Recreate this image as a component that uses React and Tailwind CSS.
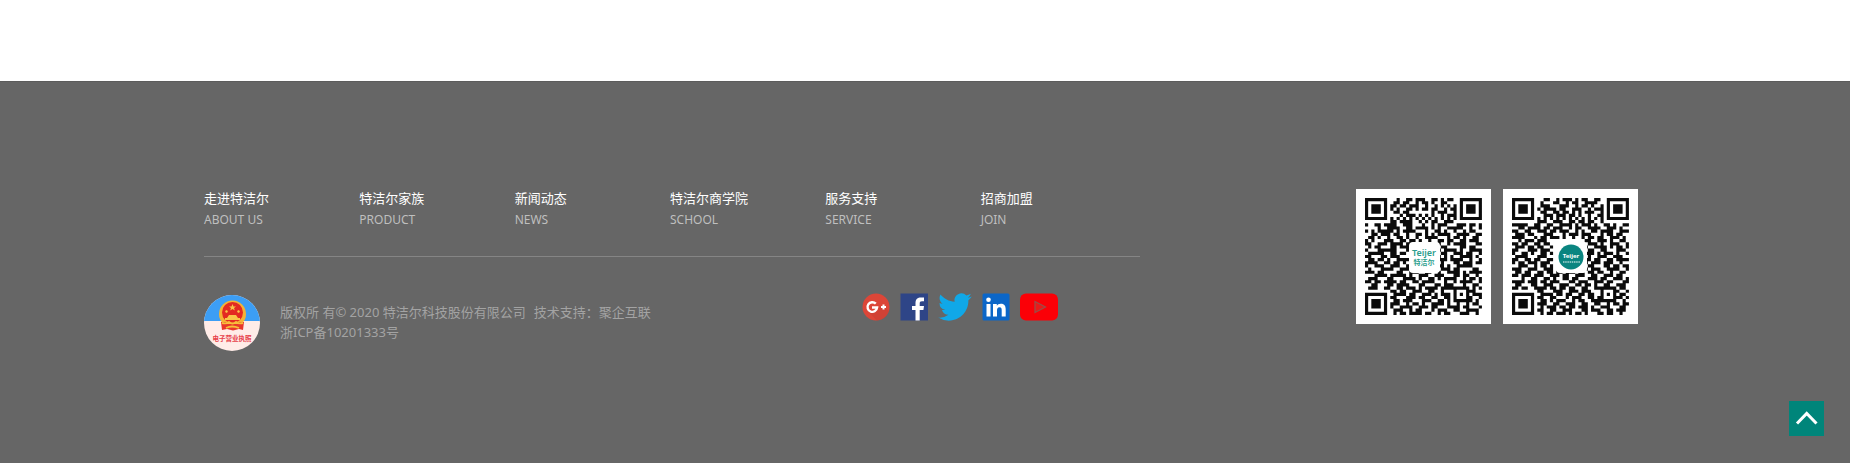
import React from 'react';

const navItems = [
  { title: '走进特洁尔', sub: 'ABOUT US' },
  { title: '特洁尔家族', sub: 'PRODUCT' },
  { title: '新闻动态', sub: 'NEWS' },
  { title: '特洁尔商学院', sub: 'SCHOOL' },
  { title: '服务支持', sub: 'SERVICE' },
  { title: '招商加盟', sub: 'JOIN' },
];

// 37 x 37 modules, one string per row
const serviceCode = [
  '#######...#..##.###..##.#.##..#######',
  '#.....#..##.##..#.##.#..##....#.....#',
  '#.###.#.##.##.###..#..#.#.#.#.#.###.#',
  '#.###.#.#.#..##.#.##.##..#.##.#.###.#',
  '#.###.#..##.##.......#.###..#.#.###.#',
  '#.....#....#.###.#.#.#..#.###.#.....#',
  '#######.#.#.#.#.#.#.#.#.#.#.#.#######',
  '........##.####..#.#.##..###.........',
  '#..##.####..###...#..#.###...###.##.#',
  '....#..####..##.####.#.#..#####..#..#',
  '#.#.#####.#.####...#..##.#..#..#.##..',
  '..##.###.##..#..##.#.#.####..####..##',
  '.##.#..#..##.#..#..####...#.##.#..##.',
  '#.#...###..##.##.#..#..##.##..##.###.',
  '##..###.####.##........#..#.####...##',
  '.#.##...##.###..........##....##.##..',
  '#...######...#.........#.####.#..####',
  '.#####..##.##...........##..###.##..#',
  '##...##.###............#.#.#..####.#.',
  '.##.##.#..####.........###.####..#..#',
  '####..##.##.#...........#...##.###.##',
  '#..###..###..#.........##.#..#####...',
  '.#...####..###..........###.##....##.',
  '###.##....##..###..##..#..####.#.####',
  '...####.#####.#..###..###...##.##..#.',
  '.###...##...####.#..##.#.####..#.##.#',
  '##.##.####.##..##.####...#..#.####..#',
  '..##...##.####...##...##.###...#..##.',
  '.###..##..##.###.#.####.#########.#.#',
  '........##.##..###..##..#...#...###..',
  '#######..####.##..###.#.###.#.#.#.###',
  '#.....#.##...###.##..##..##.#...##..#',
  '#.###.#..##.###...###..##.#.######.#.',
  '#.###.#.###..#.##.#..####.#..#..#.##.',
  '#.###.#.#..####..###.##...####.##...#',
  '#.....#..###..#.##...#.###..##..####.',
  '#######..#.##.####.##..#.##...###..#.',
];

const officialCode = [
  '#######...##..#.###.#.##..##..#######',
  '#.....#..#...##..#.##..####...#.....#',
  '#.###.#..###...###..#.##.#..#.#.###.#',
  '#.###.#.#.####.##..###..#.###.#.###.#',
  '#.###.#..##..##.##.#.#.###..#.#.###.#',
  '#.....#...###.###.##.#..#..##.#.....#',
  '#######.#.#.#.#.#.#.#.#.#.#.#.#######',
  '........###..###..##.##.##..#........',
  '#####..##..##..####.#.###.#..##.#..##',
  '..##.####.##.###..#.##..####..###.#..',
  '##..##..###.##.###..#.#..##.####..###',
  '.###.##...###...#.###.###...#.##.##..',
  '####...#.##.###.#..#..#.##.##..###.#.',
  '..#.###.###............##..###.#..##.',
  '##.##..##.##............###.#..###..#',
  '.###.##.##..#..........#..####.#.##.#',
  '##...###.###............##..##...###.',
  '#..##.#..##.#..........###.#.###.#..#',
  '.####...###.............#..###..###..',
  '##..##.##..##..........##.##..##.####',
  '#.##.###.###...........#.###.###..#..',
  '..###..#.##.#...........##...##.##.##',
  '###..###..###..........#.###..####..#',
  '.##.##..##.##.##.###.##.##.##..#..##.',
  '##.###.###..###.##..###..##..###.##..',
  '...#..##..##.#..##.##...###.##..###.#',
  '####.###.##.###...##.###..###.##...##',
  '.##...##..###..###..##.##.#..##..###.',
  '##.##..####.##.##.##..##..#######.##.',
  '........##...###..###.###...#...##..#',
  '#######..####.##.##..##.##..#.#.#.##.',
  '#.....#.##..##...#.###..##.##...###.#',
  '#.###.#..##.#.###..#.##..########..#.',
  '#.###.#.###..##..###..##..##..#.##.##',
  '#.###.#..#.###.##.##.###.#..###...##.',
  '#.....#.##..##..###...##.###..##.###.',
  '#######..#.##.###.#.##.#...##.##..#..',
];

const QrCode = ({ rows, label, children }) => (
  <svg viewBox="0 0 135 135" role="img" aria-label={label} className="size-[135px] bg-white">
    <path
      transform="translate(9 9) scale(3.16)"
      fill="#0b0b0b"
      d={rows
        .map((row, y) => row.replace(/#+/g, (run, x) => `M${x} ${y}h${run.length}v1h-${run.length}z `).replace(/\./g, ''))
        .join('')}
    />
    {children}
  </svg>
);

const LicenseBadge = () => (
  <svg viewBox="0 0 56 56" className="size-14" role="img" aria-label="电子营业执照">
    <defs>
      <clipPath id="badge">
        <circle cx="28" cy="28" r="28" />
      </clipPath>
    </defs>
    <g clipPath="url(#badge)">
      <path fill="#ffece8" d="M0 0h56v56H0z" />
      <path fill="#3c9ef5" d="M0 0h56v26H0z" />
    </g>
    <circle cx="28.500" cy="19" r="13.500" fill="#f5b335" />
    <circle cx="28.500" cy="17.500" r="10.500" fill="#e32a21" />
    <path fill="#e8372a" d="M17 27h23l-1 8-4-1-6 1.500-6-1.500-5 1z" />
    <path fill="#f9c648" d="m28.500 9 1 2.400h2.500l-2 1.600.8 2.500-2.300-1.500-2.300 1.500.8-2.500-2-1.600h2.500zM22 15l2 1-1 2-2-1zM35 15l-2 1 1 2 2-1zM25 20h7l2 3h2v2H21v-2h2z" />
    <path d="M18 28q5 1 7-1 3.500 3 7 0 2 2 7 1M22 33q6-3 13 0" fill="none" stroke="#f7bd3b" strokeWidth="1.800" />
    <text x="28" y="46" textAnchor="middle" fontSize="6.500" fontWeight="700" fill="#e7404a">
      电子营业执照
    </text>
  </svg>
);

const GooglePlus = () => (
  <svg viewBox="0 0 28 28" className="size-7">
    <circle cx="14" cy="14" r="13.500" fill="#dc4638" />
    <path d="m14 18 5-5 8 5a14 14 0 0 1-12 9.500L7 19z" fill="#c53d31" opacity=".5" />
    <path d="M13.800 10.700a4.800 4.800 0 1 0 1.300 3.800H10" fill="none" stroke="#fff" strokeWidth="2.400" />
    <path d="M21.500 11.500v5M19 14h5" stroke="#fff" strokeWidth="2" />
  </svg>
);

const Facebook = () => (
  <svg viewBox="0 0 28 28" className="size-7">
    <path fill="#2e4587" d="M.5.5H28v27H.5z" />
    <path fill="#fff" d="M15.500 27.500V17H12v-4h3.500v-3c0-4 2.200-5.600 5.400-5.600 1.500 0 2.500.1 3.100.2v3.600h-2c-1.800 0-2.300.9-2.300 2.300V13h4.300l-.6 4h-3.700v10.500z" />
  </svg>
);

const Twitter = () => (
  <svg viewBox="0 2 24 20" className="h-7 w-[34px]">
    <path
      fill="#10a8e8"
      d="M23.950 4.570a10 10 0 0 1-2.820.770 4.960 4.960 0 0 0 2.160-2.720c-.95.550-2 .95-3.130 1.180a4.920 4.920 0 0 0-8.380 4.480C7.690 8.090 4.070 6.130 1.640 3.160a4.820 4.820 0 0 0-.67 2.470c0 1.710.87 3.210 2.190 4.100a4.900 4.900 0 0 1-2.230-.62v.06a4.920 4.920 0 0 0 3.950 4.830 5 5 0 0 1-2.210.080 4.940 4.940 0 0 0 4.600 3.420A9.870 9.870 0 0 1 0 19.540a14 14 0 0 0 7.550 2.210c9.050 0 14-7.500 14-13.980l-.02-.64a9.900 9.900 0 0 0 2.420-2.560z"
    />
  </svg>
);

const LinkedIn = () => (
  <svg viewBox="0 0 28 28" className="size-7">
    <rect x=".5" y=".5" width="27" height="27" rx="1.500" fill="#0b66c8" />
    <circle cx="6.500" cy="6.800" r="2.300" fill="#fff" />
    <path fill="#fff" d="M4.500 11h4v12.500h-4zM11 11h3.800v1.700c.7-1.200 2.100-2 4-2 4 0 4.900 2.600 4.900 6v6.800h-4V17.400c0-1.600-.1-3.200-2.200-3.200-2 0-2.500 1.500-2.500 3.100v6.200h-4z" />
  </svg>
);

const YouTube = () => (
  <svg viewBox="0 0 38 28" className="h-7 w-[38px]">
    <rect y=".5" width="38" height="27" rx="6" fill="#fb0007" />
    <path d="m15 8.500 10.500 5.500L15 19.500z" fill="#e81b1b" stroke="#96504a" strokeWidth="1.200" />
  </svg>
);

const socials = [
  { name: 'Google+', Icon: GooglePlus },
  { name: 'Facebook', Icon: Facebook },
  { name: 'Twitter', Icon: Twitter },
  { name: 'LinkedIn', Icon: LinkedIn },
  { name: 'YouTube', Icon: YouTube },
];

const App = () => {
  return (
    <div className="flex min-h-screen flex-col bg-white pt-[81px] font-['Noto_Sans','Noto_Sans_CJK_SC',sans-serif] text-[13px] leading-5">
      <footer className="flex flex-1 items-start justify-between border-t border-[#5c5c5c] bg-[#666] pt-[106px] pr-[212px] pb-16 pl-[204px]">
        <div className="w-[936px]">
          <nav className="grid grid-cols-6 border-b border-[#858585] pr-1 pb-6">
            {navItems.map((item) => (
              <a key={item.sub} href="#" className="block">
                <span className="block text-white">{item.title}</span>
                <span className="block text-xs leading-6 text-[#bfbfbf]">{item.sub}</span>
              </a>
            ))}
          </nav>

          {/* Copyright + social links */}
          <div className="flex items-start justify-between pt-9 pr-[82px]">
            <div className="flex items-center gap-5 pt-[2px] text-[#a3a3a3]">
              <a href="#" aria-label="电子营业执照">
                <LicenseBadge />
              </a>
              <div className="pb-[2px]">
                <p>
                  版权所 有© 2020 特洁尔科技股份有限公司
                  <a href="#" className="ml-2">技术支持：聚企互联</a>
                </p>
                <p>
                  <a href="#">浙ICP备10201333号</a>
                </p>
              </div>
            </div>
            <div className="flex gap-[10px]">
              {socials.map(({ name, Icon }) => (
                <a key={name} href="#" aria-label={name}>
                  <Icon />
                </a>
              ))}
            </div>
          </div>
        </div>

        {/* QR codes */}
        <div className="flex gap-3 pt-px">
          <QrCode rows={serviceCode} label="Teijer 特洁尔">
            <rect x="53" y="53" width="31" height="31" rx="4" fill="#fff" />
            <text x="68" y="67" textAnchor="middle" fontSize="9" fontWeight="600" fill="#2a9d8c">
              Teijer
            </text>
            <text x="68" y="76" textAnchor="middle" fontSize="7" fontWeight="700" fill="#2a9d8c">
              特洁尔
            </text>
          </QrCode>
          <QrCode rows={officialCode} label="Teijer">
            <rect x="53" y="53" width="31" height="31" rx="4" fill="#fff" />
            <circle cx="68" cy="68" r="12.500" fill="#0a8580" />
            <text x="68" y="69" textAnchor="middle" fontSize="6" fontWeight="700" fill="#fff">
              Teijer
            </text>
            <path d="M60 73h17" stroke="#a8d5d2" strokeWidth="1.500" strokeDasharray="1.500 .7" />
          </QrCode>
        </div>
      </footer>

      <button
        type="button"
        aria-label="Back to top"
        className="fixed right-[26px] bottom-[27px] flex size-[35px] items-center justify-center bg-[#00857a] text-white"
      >
        <svg viewBox="0 0 35 35" className="size-[35px]" fill="none" stroke="currentColor" strokeWidth="3">
          <path d="m8 22.500 9.700-10 9.800 10" />
        </svg>
      </button>
    </div>
  );
};

export default App;
